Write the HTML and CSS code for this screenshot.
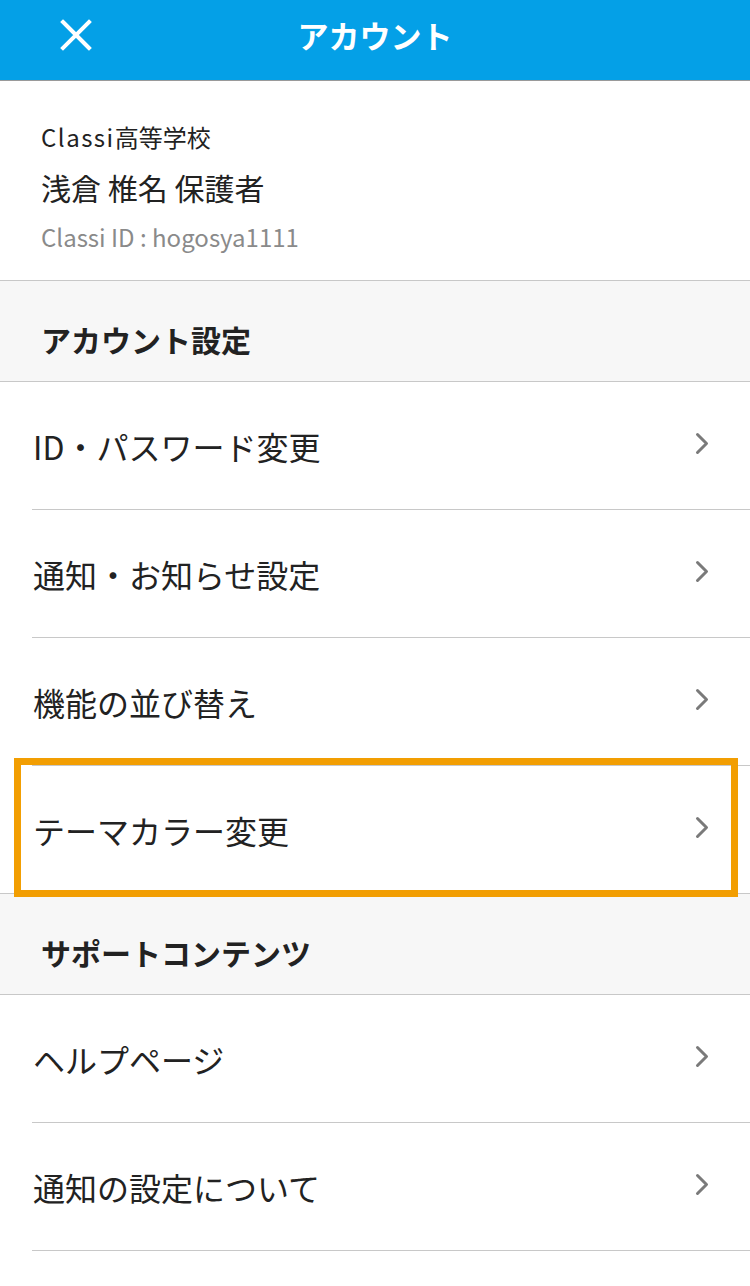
FILE: index.html
```html
<!DOCTYPE html>
<html lang="ja">
<head>
<meta charset="utf-8">
<link rel="stylesheet" href="styles.css">
</head>
<body>
<header class="topbar">
  <svg class="close" width="32" height="32" viewBox="0 0 32 32"><path d="M3 3 L29 29 M29 3 L3 29" stroke="#fff" stroke-width="4" stroke-linecap="square" fill="none"/></svg>
  <h1 class="title">アカウント</h1>
</header>
<section class="profile">
  <div class="school"><span class="latin">Classi</span>高等学校</div>
  <div class="name">浅倉 椎名 保護者</div>
  <div class="cid">Classi ID : hogosya1111</div>
</section>
<div class="section-head first">アカウント設定</div>
<ul class="list">
  <li class="row"><span>ID・パスワード変更</span><svg class="chev" width="14" height="23" viewBox="0 0 14 23"><path d="M2.5 2.5 L11.5 11.5 L2.5 20.5" stroke="#7a7a7a" stroke-width="3" stroke-linecap="round" stroke-linejoin="round" fill="none"/></svg></li>
  <li class="row"><span>通知・お知らせ設定</span><svg class="chev" width="14" height="23" viewBox="0 0 14 23"><path d="M2.5 2.5 L11.5 11.5 L2.5 20.5" stroke="#7a7a7a" stroke-width="3" stroke-linecap="round" stroke-linejoin="round" fill="none"/></svg></li>
  <li class="row"><span>機能の並び替え</span><svg class="chev" width="14" height="23" viewBox="0 0 14 23"><path d="M2.5 2.5 L11.5 11.5 L2.5 20.5" stroke="#7a7a7a" stroke-width="3" stroke-linecap="round" stroke-linejoin="round" fill="none"/></svg></li>
  <li class="row last"><span>テーマカラー変更</span><svg class="chev" width="14" height="23" viewBox="0 0 14 23"><path d="M2.5 2.5 L11.5 11.5 L2.5 20.5" stroke="#7a7a7a" stroke-width="3" stroke-linecap="round" stroke-linejoin="round" fill="none"/></svg></li>
</ul>
<div class="section-head">サポートコンテンツ</div>
<ul class="list">
  <li class="row"><span>ヘルプページ</span><svg class="chev" width="14" height="23" viewBox="0 0 14 23"><path d="M2.5 2.5 L11.5 11.5 L2.5 20.5" stroke="#7a7a7a" stroke-width="3" stroke-linecap="round" stroke-linejoin="round" fill="none"/></svg></li>
  <li class="row"><span>通知の設定について</span><svg class="chev" width="14" height="23" viewBox="0 0 14 23"><path d="M2.5 2.5 L11.5 11.5 L2.5 20.5" stroke="#7a7a7a" stroke-width="3" stroke-linecap="round" stroke-linejoin="round" fill="none"/></svg></li>
</ul>
<div class="highlight"></div>
</body>
</html>
```

FILE: styles.css
```css
html, body {
  margin: 0;
  padding: 0;
  background: #fff;
}
body {
  position: relative;
  font-family: "Noto Sans CJK JP", "Noto Sans", sans-serif;
  color: #222;
  min-height: 1286px;
}
.topbar {
  box-sizing: border-box;
  height: 81px;
  padding-bottom: 12px;
  background: #04a0e7;
  border-bottom: 1px solid #9a9a9a;
  display: flex;
  align-items: center;
  justify-content: center;
  position: relative;
}
.close {
  position: absolute;
  left: 60px;
  top: 19px;
}
.title {
  margin: 0;
  color: #fff;
  font-size: 31px;
  font-weight: 700;
  letter-spacing: 0;
}
.profile {
  padding: 31px 0 18px 41px;
  border-bottom: 1px solid #c8c8c8;
}
.profile > div {
  height: 50px;
  line-height: 50px;
}
.school {
  font-size: 24px;
}
.school .latin {
  letter-spacing: 1.5px;
}
.name {
  font-size: 30px;
}
.cid {
  font-size: 24px;
  color: #8a8a8a;
}
.section-head {
  box-sizing: border-box;
  height: 101px;
  padding-top: 16px;
  background: #f7f7f7;
  display: flex;
  align-items: center;
  padding-left: 41px;
  font-size: 30px;
  font-weight: 700;
  border-bottom: 1px solid #c8c8c8;
}
.list {
  list-style: none;
  margin: 0;
  padding: 0;
}
.row {
  height: 127px;
  margin-left: 32px;
  padding: 0 41px 0 1px;
  display: flex;
  align-items: center;
  justify-content: space-between;
  border-bottom: 1px solid #c8c8c8;
  font-size: 32px;
}
.row.last {
  margin-left: 0;
  padding-left: 33px;
}
.chev {
  display: block;
  margin-top: -4px;
}
.highlight {
  position: absolute;
  left: 14px;
  top: 758px;
  width: 724px;
  height: 139px;
  border: 7px solid #f29e02;
  box-sizing: border-box;
}
```
